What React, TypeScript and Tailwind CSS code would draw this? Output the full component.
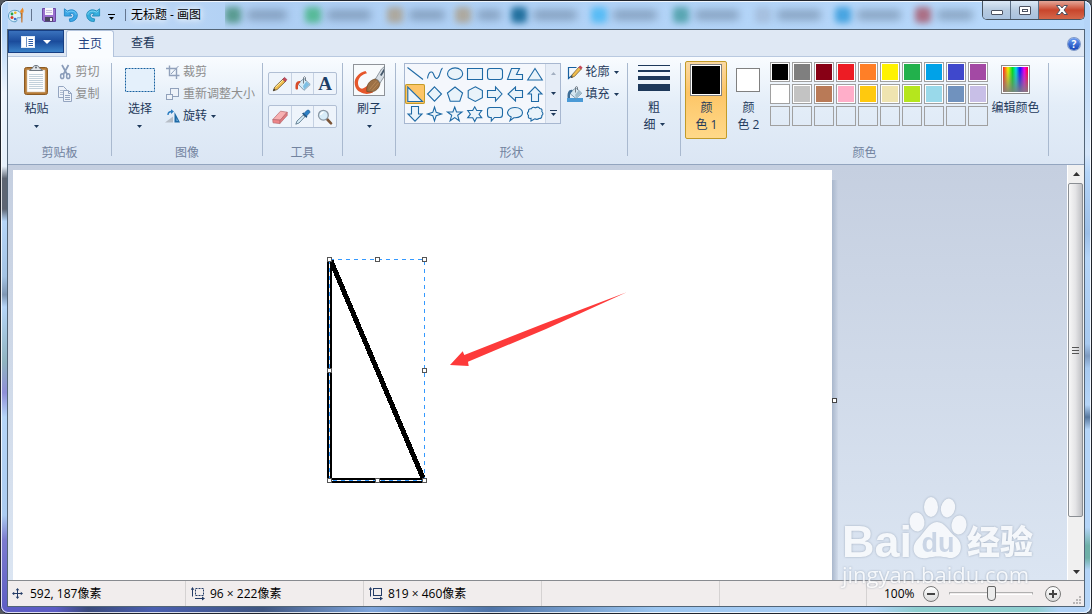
import type { ReactNode } from "react";

// ---------------------------------------------------------------------------
// Data
// ---------------------------------------------------------------------------

const PALETTE = [
  ["#000000", "#7f7f7f", "#880015", "#ed1c24", "#ff7f27", "#fff200", "#22b14c", "#00a2e8", "#3f48cc", "#a349a4"],
  ["#ffffff", "#c3c3c3", "#b97a57", "#ffaec9", "#ffc90e", "#efe4b0", "#b5e61d", "#99d9ea", "#7092be", "#c8bfe7"],
  ["", "", "", "", "", "", "", "", "", ""],
];

const SHAPES: { name: string; d: string; open?: boolean }[] = [
  { name: "直线", d: "M2.5 3.5 L18 15.5", open: true },
  { name: "曲线", d: "M2.5 14.5 C3.5 8 6.5 6 8.5 10 C10.5 15.5 12.5 16 14.5 11 C15.5 8 16 5 17.5 4", open: true },
  { name: "椭圆形", d: "M2.5 9.7 A7.6 5.8 0 1 0 17.7 9.7 A7.6 5.8 0 1 0 2.5 9.7 Z" },
  { name: "矩形", d: "M2.5 4.5 H17.5 V15.5 H2.5 Z" },
  { name: "圆角矩形", d: "M5 4.5 H15 Q17.5 4.5 17.5 7 V13 Q17.5 15.5 15 15.5 H5 Q2.5 15.5 2.5 13 V7 Q2.5 4.5 5 4.5 Z" },
  { name: "多边形", d: "M6.5 4.5 H14.5 L11.5 10.5 H17.5 V15.5 H2.5 Z" },
  { name: "三角形", d: "M10 4.5 L17.3 16 H2.7 Z" },
  { name: "直角三角形", d: "M2.8 3 V17.5 H17.5 Z" },
  { name: "菱形", d: "M9.5 2.8 L16.5 10 L9.5 17.2 L2.5 10 Z" },
  { name: "五边形", d: "M10 3 L17.6 9 L14.8 17.3 H5.2 L2.4 9 Z" },
  { name: "六边形", d: "M10.3 2.8 L17.4 6.5 V13.7 L10.3 17.4 L3.2 13.7 V6.5 Z" },
  { name: "右箭头", d: "M2.5 6.5 H10.5 V3 L17 10 L10.5 17 V13.5 H2.5 Z" },
  { name: "左箭头", d: "M17.5 6.5 H10.5 V3 L3 10 L10.5 17 V13.5 H17.5 Z" },
  { name: "上箭头", d: "M6.5 17.5 V10 H3 L10 2.8 L17 10 H13.5 V17.5 Z" },
  { name: "下箭头", d: "M6.5 2.5 V10 H3 L10 17.2 L17 10 H13.5 V2.5 Z" },
  { name: "四角星", d: "M9.5 3 L11.2 8.3 L16.5 10 L11.2 11.7 L9.5 17 L7.8 11.7 L2.5 10 L7.8 8.3 Z" },
  { name: "五角星", d: "M9.7 3 L11.5 8 H17 L12.7 11.3 L14.3 16.8 L9.7 13.6 L5.1 16.8 L6.7 11.3 L2.4 8 H7.9 Z" },
  { name: "六角星", d: "M9.7 2.8 L11.7 6.5 H16.7 L14 10.2 L16.7 13.8 H11.7 L9.7 17.5 L7.7 13.8 H2.7 L5.4 10.2 L2.7 6.5 H7.7 Z" },
  { name: "圆角矩形标注", d: "M5 3.5 H15 Q17.5 3.5 17.5 6 V10.5 Q17.5 13.5 15 13.5 H9.5 L6.3 17 V13.5 H5 Q2.5 13.5 2.5 10.5 V6 Q2.5 3.5 5 3.5 Z" },
  { name: "椭圆形标注", d: "M6.2 13.1 C-.5 10 3 3.5 10 3.5 C20 3.5 20 13.8 10 13.8 L8.8 13.7 L5 16.7 Z" },
  { name: "云形标注", d: "M6 14.4 Q2.5 14.8 3.5 11.7 Q1.3 9 3.6 7.5 Q3 4.5 6.2 4.8 Q8 2.2 10.3 3.8 Q13.5 2.1 14.7 4.5 Q17.8 4.8 16.8 7.5 Q19 9.9 16.8 11.5 Q17.2 14.5 14 14.5 Q12 16 9.8 14.8 L6 17 Z" },
];

const GLASS_TABS = [
  { icon: "bg-green-800/50", width: "w-20", text: "w-10" },
  { icon: "bg-green-600/50", width: "w-[82px]", text: "w-11" },
  { icon: "bg-yellow-700/35", width: "w-[68px]", text: "w-9" },
  { icon: "bg-yellow-700/35", width: "w-14", text: "w-6" },
  { icon: "bg-sky-800/80", width: "w-20", text: "w-11" },
  { icon: "bg-sky-500/50", width: "w-[82px]", text: "w-11" },
  { icon: "bg-teal-700/50", width: "w-[82px]", text: "w-11" },
  { icon: "bg-slate-400/40", width: "w-20", text: "w-11" },
  { icon: "bg-sky-600/60", width: "w-20", text: "w-11" },
  { icon: "bg-red-800/50", width: "w-16", text: "w-9" },
];

// ---------------------------------------------------------------------------
// Icons
// ---------------------------------------------------------------------------

function Svg({ size = 16, children }: { size?: number; children: ReactNode }) {
  return (
    <svg width={size} height={size} viewBox={`0 0 ${size} ${size}`} fill="none" className="shrink-0" aria-hidden="true">
      {children}
    </svg>
  );
}

function Caret({ className = "" }: { className?: string }) {
  return (
    <svg width="5" height="3" viewBox="0 0 5 3" className={`shrink-0 ${className}`} aria-hidden="true">
      <path d="M0 0 H5 L2.5 3 Z" fill="currentColor" />
    </svg>
  );
}

function PaintLogo() {
  return (
    <Svg>
      <path d="M7 3.3 C2.6 3.3 .5 6 .5 9 C.5 12.5 3.5 14.8 7 14.8 C9 14.8 9 13.2 8.7 12.2 C8.6 10.8 10 10.5 11.3 10.8 C13 11 13.5 9.5 13.3 8 C12.8 5 10.3 3.3 7 3.3 Z" fill="#d9f0fb" stroke="#5b9cc4" />
      <circle cx="4" cy="7" r="1.4" fill="#29a34a" />
      <circle cx="7.3" cy="5.7" r="1.3" fill="#e6b422" />
      <circle cx="4" cy="10.6" r="1.5" fill="#d8402c" />
      <circle cx="7" cy="12" r="1.2" fill="#3a66cf" />
      <path d="M13 5.5 L14.6 5.5 L14.4 15.5 L13.4 15.5 Z" fill="#c46a19" />
      <path d="M12 5.5 C12 3 14 2.5 14.5 .5 C16 3 15.7 4.2 15.3 5.8 Z" fill="#e98b2a" />
    </Svg>
  );
}

function SaveIcon() {
  return (
    <Svg>
      <path d="M1.5 1.5 H14.5 V14.5 H3 L1.5 13 Z" fill="#9a70cf" stroke="#6a4ba6" />
      <rect x="4" y="1" width="8" height="7" fill="#f7f5fb" />
      <path d="M5 3.5 H11 M5 5.5 H11" stroke="#c9bfdc" />
      <rect x="4" y="10" width="8" height="4.5" fill="#4a4760" />
      <rect x="9" y="11" width="2" height="3" fill="#ece8f5" />
    </Svg>
  );
}

function UndoIcon() {
  return (
    <Svg>
      <path d="M1.4 1.8 L4.3 4 C9.5 1.2 14.3 4 14.3 8.2 C14.3 12 11 14.8 6.8 14.6 L6.3 11.9 C9 11.8 10.8 10.4 10.8 8.6 C10.8 6.6 8.6 5.8 6.7 6.8 L8.8 9 H1.4 Z" fill="#3ba7e6" stroke="#2486c4" strokeWidth=".9" />
      <path d="M2.4 3.8 L4.4 5.2 C8.7 3 12.8 4.5 13.2 7.6" stroke="#7fd0f6" strokeWidth=".9" />
    </Svg>
  );
}

function RedoIcon() {
  return (
    <Svg>
      <path d="M14.6 1.8 L11.7 4 C6.5 1.2 1.7 4 1.7 8.2 C1.7 12 5 14.8 9.2 14.6 L9.7 11.9 C7 11.8 5.2 10.4 5.2 8.6 C5.2 6.6 7.4 5.8 9.3 6.8 L7.2 9 H14.6 Z" fill="#36aede" stroke="#248bb8" strokeWidth=".9" />
      <path d="M13.6 3.8 L11.6 5.2 C7.3 3 3.2 4.5 2.8 7.6" stroke="#84d8f3" strokeWidth=".9" />
    </Svg>
  );
}

function ClipboardIcon() {
  return (
    <Svg size={32}>
      <rect x="4.5" y="3.5" width="23" height="27" rx="2" fill="#b77b35" stroke="#8a5a24" />
      <rect x="7" y="6" width="18" height="22" fill="#fdfdfd" stroke="#d3c4ae" strokeWidth=".6" />
      <path d="M9 10.5 H23 M9 12.5 H23 M9 14.5 H23 M9 16.5 H23 M9 18.5 H23 M9 20.5 H23 M9 22.5 H23 M9 24.5 H23" stroke="#b4c5d2" strokeWidth=".8" />
      <path d="M9.5 6.5 L13 3.5 C13 .8 19 .8 19 3.5 L22.5 6.5 Z" fill="#dfe3e7" stroke="#6d7680" />
      <circle cx="16" cy="3.4" r="1" fill="#5c6570" />
    </Svg>
  );
}

function CutIcon() {
  return (
    <Svg>
      <path d="M5 1 L10.2 10.5 M11.5 1 L6.3 10.5" stroke="#8a9cb9" strokeWidth="1.7" />
      <ellipse cx="5.2" cy="12.2" rx="1.6" ry="2.4" stroke="#8a9cb9" strokeWidth="1.5" />
      <ellipse cx="11.2" cy="12.2" rx="1.6" ry="2.4" stroke="#8a9cb9" strokeWidth="1.5" />
    </Svg>
  );
}

function CopyIcon() {
  return (
    <Svg>
      <path d="M1.5 .5 H6.5 L9.5 3.5 V11.5 H1.5 Z" fill="#edf2f9" stroke="#94a5c0" />
      <path d="M3 4.5 H6 M3 6.5 H6 M3 8.5 H6" stroke="#b0bdd1" />
      <path d="M6.5 4.5 H11.5 L14.5 7.5 V15.5 H6.5 Z" fill="#edf2f9" stroke="#94a5c0" />
      <path d="M11.5 4.5 V7.5 H14.5 M8 9.5 H13 M8 11.5 H13 M8 13.5 H13" stroke="#94a5c0" />
    </Svg>
  );
}

function SelectIcon() {
  return (
    <Svg size={32}>
      <rect x="1.5" y="4.5" width="29" height="23" fill="#e4f0fb" stroke="#17609f" strokeDasharray="2 1" />
    </Svg>
  );
}

function CropIcon() {
  return (
    <Svg>
      <path d="M1 4.5 H11.5 V15 M4.5 1.5 V11.5 H14.5" stroke="#91a1bb" strokeWidth="1.4" />
      <path d="M6 10 L13.5 2" stroke="#91a1bb" />
    </Svg>
  );
}

function ResizeIcon() {
  return (
    <Svg>
      <rect x="5.5" y="2.5" width="8" height="8" fill="#edf2f9" stroke="#91a1bb" />
      <rect x="1.5" y="8.5" width="6" height="5" fill="#edf2f9" stroke="#91a1bb" />
    </Svg>
  );
}

function RotateIcon() {
  return (
    <Svg>
      <path d="M0 14.5 H8 V8.5 Z" fill="#b7bec7" />
      <path d="M9.5 14.5 V4 L15 14.5 Z" fill="#1d69a5" />
      <path d="M11.5 13 V10 L13 13 Z" fill="#7ebbe5" />
      <path d="M3 7 C3 4 5 3.5 7 3.5" stroke="#2a7cc0" strokeWidth="1.4" />
      <path d="M6 1.2 L9 3.5 L6 6 Z" fill="#2a7cc0" />
    </Svg>
  );
}

function PencilIcon() {
  return (
    <Svg>
      <path d="M1.3 14.8 L2.8 11 L11.5 2.5 L14 5 L5.2 13.5 Z" fill="#f0bd4d" stroke="#6d552d" strokeWidth=".8" />
      <path d="M3.5 11.3 L12 3.2" stroke="#fff0a6" />
      <path d="M10.7 3.3 L12.5 1.3 L15 3.7 L13 5.7 Z" fill="#c5485b" stroke="#8d3341" strokeWidth=".5" />
      <path d="M1 15 L1.9 12.6 L3.5 14.1 Z" fill="#333" />
    </Svg>
  );
}

function BucketIcon() {
  return (
    <Svg>
      <path d="M3.5 7 L9 2.5 L15.2 8.5 L9 14.3 L3.5 8.5 Z" fill="#d5ebf7" stroke="#6b8799" strokeWidth=".8" />
      <path d="M9 13.6 L14.5 8.4 L11.3 5.5 L8 10 Z" fill="#7dbfe4" />
      <path d="M8.5 7.5 L8.5 1.5 Q9.5 -.2 10.5 1.5 V5" stroke="#737d87" />
      <path d="M5.2 5 C1.5 4.5 0 7.5 .6 13 Q1.7 14.2 3 13 C3 9 3.2 7.5 5.2 7 Z" fill="#d84c2a" />
    </Svg>
  );
}

function EraserIcon() {
  return (
    <Svg>
      <path d="M.8 10.5 L8.5 2.2 L15.2 3.2 L8.2 11.2 Z" fill="#f7b0b1" stroke="#b9686d" strokeWidth=".7" />
      <path d="M.8 10.5 L8.2 11.2 L7.8 14.6 L1 13.8 Z" fill="#ee8588" stroke="#b9686d" strokeWidth=".7" />
      <path d="M8.2 11.2 L15.2 3.2 V6.4 L7.8 14.6 Z" fill="#e07b80" stroke="#b9686d" strokeWidth=".7" />
    </Svg>
  );
}

function DropperIcon() {
  return (
    <Svg>
      <path d="M.8 15.2 L2 12 L8.2 6.2 L9.8 7.8 L4 14 Z" fill="#d8edf8" stroke="#4d6c82" strokeWidth=".8" />
      <path d="M7 4.5 L8.5 3.6 L12.4 7.5 L11.4 9 Z" fill="#22547f" />
      <path d="M9 4.5 L11.8 1.5 Q14.5 .2 15 3.2 L11.5 7 Z" fill="#2c7fc4" stroke="#1c5c97" strokeWidth=".7" />
    </Svg>
  );
}

function MagnifierIcon() {
  return (
    <Svg>
      <path d="M9.5 9.5 L14 14.3" stroke="#7b5538" strokeWidth="2.6" strokeLinecap="round" />
      <circle cx="6.4" cy="6.2" r="4.9" fill="#d8edf9" stroke="#8b98a4" strokeWidth="1.3" />
      <path d="M3.5 6 Q4 3.5 6.5 3.3" stroke="#fff" strokeWidth="1.3" />
    </Svg>
  );
}

function BrushIcon() {
  return (
    <Svg size={32}>
      <rect x=".5" y=".5" width="31" height="31" fill="#f7fafc" stroke="#8f9399" />
      <path d="M12.5 7 C6 8.5 .8 14 1.8 20.5 C3 27.5 9 30.5 17 28.5 L15 24.5 C9 26.5 5 24 5 19 C5 14 9 10 14 9.2 Z" fill="#e5562b" />
      <path d="M5 24 C9 26.5 12 23.5 15.5 20.5 L20 28.5 C14 31 8 30.5 5 24 Z" fill="#e5562b" />
      <path d="M13.8 27.5 C13.2 21 16 16.5 22.5 14.8 Q25.5 15 27 19 C26.5 25.5 20.5 29.5 13.8 27.5 Z" fill="#9c7045" stroke="#61401f" strokeWidth=".6" />
      <path d="M16.5 25.5 L23.5 17 M19 26.5 L25.5 19" stroke="#bd8d5a" strokeWidth=".8" />
      <path d="M22.5 14.8 L28.5 5 L31.5 2.5 V12 L27 19 Q25.5 15.5 22.5 14.8 Z" fill="#d7dee4" stroke="#6b7680" strokeWidth=".7" />
      <path d="M27 11 L31 4.5 V8 L28.5 12 Z" fill="#44576a" />
    </Svg>
  );
}

function OutlineIcon() {
  return (
    <Svg>
      <path d="M9.5 3.5 H1.5 V14.5 L8 9" stroke="#17609f" strokeWidth="1.2" />
      <path d="M4.2 13.6 L5.4 10.4 L12.2 2.7 L14.6 4.8 L7.5 12.4 Z" fill="#f0bd4d" stroke="#6d552d" strokeWidth=".7" />
      <path d="M11.5 3.4 L13.2 1.4 L15.6 3.6 L13.8 5.6 Z" fill="#c5485b" />
      <path d="M4 14 L4.7 12 L6 13.2 Z" fill="#333" />
    </Svg>
  );
}

function FillIcon() {
  return (
    <Svg>
      <rect x="0" y="12" width="16" height="4" fill="#4a9ad6" />
      <path d="M3.5 6 L9 1.8 L14.7 7.2 L9 12.5 L3.5 8 Z" fill="#d4e6f0" stroke="#6b8799" strokeWidth=".8" />
      <path d="M9 11.8 L14 7.2 L11.3 4.8 L8 9 Z" fill="#a0bccc" />
      <path d="M8.5 6.5 V1.2 Q9.5 -.2 10.5 1.2 V4" stroke="#737d87" />
      <path d="M5.2 3.8 C1.5 3.5 .2 6.5 .6 12 H3 C3 8 3.2 6.5 5.2 6 Z" fill="#3d6d96" />
    </Svg>
  );
}

function MoveIcon() {
  return (
    <Svg size={12}>
      <path d="M5.5 1.5 V9.5 M1.5 5.5 H9.5" stroke="#243c66" />
      <path d="M5.5 0 L7.3 2.2 H3.7 Z M5.5 11 L3.7 8.8 H7.3 Z M0 5.5 L2.2 3.7 V7.3 Z M11 5.5 L8.8 7.3 V3.7 Z" fill="#243c66" />
    </Svg>
  );
}

function SizeIcon({ dashed = false }: { dashed?: boolean }) {
  return (
    <Svg size={14}>
      <rect x="4.5" y="1.5" width="8" height="7" stroke="#243c66" strokeDasharray={dashed ? "2 1" : undefined} />
      <path d="M1.5 2 V9.5 M4 11.5 H12" stroke="#243c66" />
      <path d="M1.5 0 L3.3 2.8 H-.3 Z M14 11.5 L11 13.5 V9.5 Z" fill="#243c66" />
    </Svg>
  );
}

// ---------------------------------------------------------------------------
// Title bar
// ---------------------------------------------------------------------------

function TitleBar() {
  return (
    <header className="flex h-[28px] shrink-0 items-start">
      <div className="flex h-[28px] shrink-0 items-center pl-px text-black">
        <PaintLogo />
        <span className="ml-[7px] h-3 w-px bg-slate-500" />
        <button aria-label="保存" className="ml-[9px]"><SaveIcon /></button>
        <button aria-label="撤消" className="ml-[6px]"><UndoIcon /></button>
        <button aria-label="重做" className="ml-[6px]"><RedoIcon /></button>
        <button aria-label="自定义快速访问工具栏" className="ml-[7px] flex flex-col items-center gap-[2px] pt-1">
          <span className="h-px w-[7px] bg-black" />
          <Caret />
        </button>
        <span className="mr-[5px] ml-[10px] h-3 w-px bg-slate-500" />
        <h1 className="text-[12px] [text-shadow:0_0_6px_white,0_0_8px_white]">无标题 - 画图</h1>
      </div>
      <div className="ml-6 flex h-[28px] min-w-0 flex-1 items-center overflow-hidden" aria-hidden="true">
        {GLASS_TABS.map((tab, i) => (
          <div key={i} className={`flex shrink-0 items-center gap-[6px] ${tab.width}`}>
            <span className={`h-4 w-4 rounded-sm blur-[3px] ${tab.icon}`} />
            <span className={`h-[10px] rounded-sm bg-slate-700/35 blur-[4px] ${tab.text}`} />
          </div>
        ))}
      </div>
      <div className="flex h-[19px] w-[103px] shrink-0 overflow-hidden rounded-b-[5px] border border-t-0 border-[#46535f]">
        <button aria-label="最小化" className="flex w-7 items-center justify-center border-r border-[#5c6f85] bg-linear-to-b from-[#dce9f6] via-[#b7cbe0] to-[#a9c2df]">
          <span className="mt-1 h-[5px] w-3 rounded-[1px] border border-[#4c5261] bg-white" />
        </button>
        <button aria-label="最大化" className="flex w-7 items-center justify-center border-r border-[#5c6f85] bg-linear-to-b from-[#dce9f6] via-[#b7cbe0] to-[#a9c2df]">
          <span className="flex h-[9px] w-3 items-center justify-center rounded-[1px] border border-[#4c5261] bg-white">
            <span className="h-[3px] w-[6px] border border-[#4c5261]" />
          </span>
        </button>
        <button aria-label="关闭" className="flex flex-1 items-center justify-center bg-linear-to-b from-[#e3a799] via-[#c8452c] to-[#d4674a]">
          <svg width="14" height="12" viewBox="0 0 14 12" aria-hidden="true">
            <path d="M1.5 1.5 H5 L7 4 L9 1.5 H12.5 L9 6 L12.5 10.5 H9 L7 8 L5 10.5 H1.5 L5 6 Z" fill="#fff" stroke="#4c5261" />
          </svg>
        </button>
      </div>
    </header>
  );
}

function TabRow() {
  return (
    <nav className="flex h-[27px] shrink-0 items-end border-b border-[#b9c9e0] bg-[#dfe8f4] pr-1">
      <button aria-label="文件" className="mb-[3px] flex h-[23px] w-14 items-center justify-center gap-2 border border-[#173f83] bg-linear-to-b from-[#3a72bd] via-[#1b4c9c] to-[#3b82c8] text-white">
        <svg width="14" height="12" viewBox="0 0 14 12" aria-hidden="true">
          <rect x=".5" y=".5" width="13" height="11" fill="#fff" stroke="#dfeaf7" />
          <path d="M5.5 1 V11" stroke="#6d92c5" />
          <path d="M7.5 3.5 H12 M7.5 5.5 H12 M7.5 7.5 H12 M7.5 9.5 H12" stroke="#2f5fa7" />
        </svg>
        <svg width="8" height="4" viewBox="0 0 8 4" aria-hidden="true">
          <path d="M0 0 H8 L4 4 Z" fill="#fff" />
        </svg>
      </button>
      <button className="-mb-px ml-[2px] h-[27px] w-12 rounded-t-[3px] border border-b-0 border-[#b2c3dc] bg-[#f9fcff] text-[#1e3f80]">
        主页
      </button>
      <button className="h-[26px] w-[58px] text-[#1e395b]">查看</button>
      <button aria-label="帮助" className="mb-[6px] ml-auto flex h-3 w-3 items-center justify-center rounded-full bg-linear-to-b from-[#6d9cf0] to-[#1543b8] text-[10px] leading-[10px] font-bold text-white ring-1 ring-[#7e98c8]">
        ?
      </button>
    </nav>
  );
}

// ---------------------------------------------------------------------------
// Ribbon
// ---------------------------------------------------------------------------

function Group({ label, width, children }: { label?: string; width: string; children: ReactNode }) {
  return (
    <section className={`flex h-[107px] shrink-0 flex-col ${width}`}>
      <div className="mt-[6px] mb-2 flex flex-1 flex-col border-r border-[#a9b9cf] pt-1">
        <div className="-mt-[6px] flex flex-1 items-start justify-center">{children}</div>
        {label && <p className="-mb-[5px] text-center leading-4 text-[#72839f]">{label}</p>}
      </div>
    </section>
  );
}

function BigButton({ icon, label }: { icon: ReactNode; label: string }) {
  return (
    <button className="flex w-[42px] flex-col items-center pt-[3px] text-[#1e395b]">
      {icon}
      <span className="mt-[5px] leading-4">{label}</span>
      <Caret className="mt-2" />
    </button>
  );
}

function RowButton({ icon, label, disabled, caret }: { icon: ReactNode; label: string; disabled?: boolean; caret?: boolean }) {
  return (
    <button
      disabled={disabled}
      className={`flex h-[22px] items-center gap-[2px] whitespace-nowrap ${disabled ? "text-[#8d8d8d]" : "text-[#1e395b]"}`}
    >
      {icon}
      {label}
      {caret && <Caret className="ml-[2px]" />}
    </button>
  );
}

function ToolBox({ tools }: { tools: { name: string; icon: ReactNode }[] }) {
  return (
    <div className="flex h-[23px] w-[69px] divide-x divide-[#c5d1e2] rounded-[2px] border border-[#b1bfd4] bg-[#eef4fb]">
      {tools.map((tool) => (
        <button key={tool.name} aria-label={tool.name} className="flex flex-1 items-center justify-center">
          {tool.icon}
        </button>
      ))}
    </div>
  );
}

function ShapeGallery() {
  return (
    <div className="flex h-[61px] border border-[#a7b7d0] bg-[#f4f7fc]">
      <div className="grid grid-cols-7">
        {SHAPES.map((shape) => {
          const selected = shape.name === "直角三角形";
          return (
            <button
              key={shape.name}
              aria-label={shape.name}
              aria-pressed={selected}
              className={`h-5 w-5 ${selected ? "rounded-[2px] bg-[#fdc568] ring-1 ring-[#c29b29] ring-inset" : ""}`}
            >
              <svg width="20" height="20" viewBox="0 0 20 20" aria-hidden="true">
                <path d={shape.d} fill={shape.open ? "none" : "#e9f3fa"} stroke="#1f6aa5" strokeWidth="1.1" />
              </svg>
            </button>
          );
        })}
      </div>
      <div className="flex w-[15px] flex-col border-l border-[#cfd9e7] bg-[#e6edf7] text-[#1e395b]">
        <button aria-label="上移" className="flex flex-1 items-center justify-center text-[#a3afc1]">
          <Caret className="rotate-180" />
        </button>
        <button aria-label="下移" className="flex flex-1 items-center justify-center">
          <Caret />
        </button>
        <button aria-label="更多形状" className="flex flex-1 flex-col items-center justify-center gap-[2px]">
          <span className="h-px w-[7px] bg-[#1e395b]" />
          <Caret />
        </button>
      </div>
    </div>
  );
}

function Palette() {
  return (
    <div className="mt-px flex flex-col gap-[2px]">
      {PALETTE.map((row, r) => (
        <div key={r} className="flex gap-[2px]">
          {row.map((color, c) => (
            <button
              key={c}
              aria-label={color || "自定义颜色"}
              className={`h-5 w-5 border border-[#a0a0a0] p-px ${color ? "bg-white" : ""}`}
            >
              <span className="block h-4 w-4" style={{ background: color || "transparent" }} />
            </button>
          ))}
        </div>
      ))}
    </div>
  );
}

function Ribbon() {
  return (
    <div className="flex h-[108px] shrink-0 overflow-hidden border-b border-[#93a5bf] bg-linear-to-b from-[#f9fcff] via-[#e3edf8] via-45% to-[#dbe6f4]">
      <Group label="剪贴板" width="w-[104px]">
        <BigButton icon={<ClipboardIcon />} label="粘贴" />
        <div className="mr-1">
          <RowButton icon={<CutIcon />} label="剪切" disabled />
          <RowButton icon={<CopyIcon />} label="复制" disabled />
        </div>
      </Group>

      <Group label="图像" width="w-[151px]">
        <BigButton icon={<SelectIcon />} label="选择" />
        <div className="ml-1">
          <RowButton icon={<CropIcon />} label="裁剪" disabled />
          <RowButton icon={<ResizeIcon />} label="重新调整大小" disabled />
          <RowButton icon={<RotateIcon />} label="旋转" caret />
        </div>
      </Group>

      <Group label="工具" width="w-20">
        <div className="flex flex-col gap-[10px] pt-[11px]">
          <ToolBox
            tools={[
              { name: "铅笔", icon: <PencilIcon /> },
              { name: "用颜色填充", icon: <BucketIcon /> },
              { name: "文本", icon: <span className="font-['Liberation_Serif',serif] text-[19px] leading-5 font-bold text-[#1c3d66]">A</span> },
            ]}
          />
          <ToolBox
            tools={[
              { name: "橡皮擦", icon: <EraserIcon /> },
              { name: "颜色选取器", icon: <DropperIcon /> },
              { name: "放大镜", icon: <MagnifierIcon /> },
            ]}
          />
        </div>
      </Group>

      <Group width="w-[53px]">
        <BigButton icon={<BrushIcon />} label="刷子" />
      </Group>

      <Group label="形状" width="w-[232px]">
        <div className="pt-[2px]">
          <ShapeGallery />
        </div>
        <div className="ml-[6px]">
          <RowButton icon={<OutlineIcon />} label="轮廓" caret />
          <RowButton icon={<FillIcon />} label="填充" caret />
        </div>
      </Group>

      <Group width="w-[53px]">
        <button className="flex w-[42px] flex-col items-center pt-1 text-[#1e395b]">
          <span className="flex w-8 flex-col gap-1 pb-1">
            <span className="h-px bg-[#1e395b]" />
            <span className="h-[2px] bg-[#1e395b]" />
            <span className="h-1 bg-[#1e395b]" />
            <span className="h-[7px] bg-[#1e395b]" />
          </span>
          <span className="mt-1 leading-[17px]">粗</span>
          <span className="flex items-center gap-1 leading-[17px]">
            细
            <Caret />
          </span>
        </button>
      </Group>

      <Group label="颜色" width="w-[368px]">
        <button aria-pressed="true" className="flex h-[78px] w-[42px] flex-col items-center rounded-[2px] border border-[#c29b29] bg-linear-to-b from-[#fbd9a3] via-[#fdc566] via-40% to-[#ffd989] pt-[2px] text-[#1e395b]">
          <span className="h-8 w-8 border border-[#808080] bg-white p-px">
            <span className="block h-full bg-black" />
          </span>
          <span className="mt-[3px] leading-[17px]">颜</span>
          <span className="leading-[17px]">色 1</span>
        </button>
        <button aria-pressed="false" className="flex h-[78px] w-[42px] flex-col items-center pt-[7px] text-[#1e395b]">
          <span className="h-6 w-6 border border-[#808080] bg-white" />
          <span className="mt-[7px] leading-[17px]">颜</span>
          <span className="leading-[17px]">色 2</span>
        </button>
        <div className="ml-px">
          <Palette />
        </div>
        <button className="flex flex-col items-center pr-1 pl-[3px] pt-1 text-[#1e395b]">
          <span className="h-[29px] w-[29px] border border-[#8c8c8c] bg-white p-px">
            <svg width="25" height="25" viewBox="0 0 25 25" aria-hidden="true">
              <defs>
                <linearGradient id="hue">
                  <stop offset="0" stopColor="#f22" />
                  <stop offset=".2" stopColor="#ee0" />
                  <stop offset=".38" stopColor="#0d2" />
                  <stop offset=".52" stopColor="#0dd" />
                  <stop offset=".68" stopColor="#11f" />
                  <stop offset=".85" stopColor="#e0e" />
                  <stop offset="1" stopColor="#f03" />
                </linearGradient>
                <linearGradient id="fade" x2="0" y2="1">
                  <stop offset=".1" stopColor="#808080" stopOpacity="0" />
                  <stop offset="1" stopColor="#808080" stopOpacity=".9" />
                </linearGradient>
              </defs>
              <rect width="25" height="25" fill="url(#hue)" />
              <rect width="25" height="25" fill="url(#fade)" />
            </svg>
          </span>
          <span className="mt-[6px] leading-4 whitespace-nowrap">编辑颜色</span>
        </button>
      </Group>
    </div>
  );
}

// ---------------------------------------------------------------------------
// Workspace
// ---------------------------------------------------------------------------

const HANDLES = [
  [316, 89], [364, 89], [411, 89],
  [316, 200], [411, 200],
  [316, 310], [364, 310], [411, 310],
];

function Drawing() {
  return (
    <svg width="819" height="460" viewBox="0 0 819 460" className="block bg-white" aria-label="画布">
      <g shapeRendering="crispEdges">
        <path d="M316.5 92 V310.5 H410" fill="none" stroke="#000" strokeWidth="5" />
        <path d="M318 91 L410 308" stroke="#000" strokeWidth="5" />
        <path d="M316.5 92 V310.5 H411" fill="none" stroke="#fff" />
        <path d="M316.5 89.5 H411.5 V310.5 M316.5 89.5 V310.5 H411.5" fill="none" stroke="#3399ff" strokeDasharray="4 4" />
        {HANDLES.map(([x, y]) => (
          <rect key={`${x}-${y}`} x={x - 1.5} y={y - 1.5} width="4" height="4" fill="#fff" stroke="#555" />
        ))}
      </g>
      <path d="M437 195 L449.7 181.3 L451.3 185 L530 154 L613.7 122.3 L533 159 L455 191.7 L455.7 196 Z" fill="#fd3a3a" />
    </svg>
  );
}

function VerticalScrollbar() {
  return (
    <div className="flex w-[17px] shrink-0 flex-col border-l border-white bg-[#f0f0f0]">
      <button aria-label="向上滚动" className="flex h-[18px] items-center justify-center">
        <svg width="7" height="4" viewBox="0 0 7 4" aria-hidden="true"><path d="M3.5 0 L7 4 H0 Z" fill="#333" /></svg>
      </button>
      <div className="flex-1 pb-[46px]">
        <div className="flex h-full w-[15px] flex-col items-center justify-center gap-[2px] rounded-[2px] border border-[#8b8f94] bg-linear-to-r from-[#f7f7f7] via-[#e4e4e6] to-[#bfc0c4]">
          <span className="h-px w-[7px] bg-[#555]" />
          <span className="h-px w-[7px] bg-[#555]" />
          <span className="h-px w-[7px] bg-[#555]" />
        </div>
      </div>
      <button aria-label="向下滚动" className="flex h-[17px] items-center justify-center">
        <svg width="7" height="4" viewBox="0 0 7 4" aria-hidden="true"><path d="M0 0 H7 L3.5 4 Z" fill="#333" /></svg>
      </button>
    </div>
  );
}

function Watermark() {
  return (
    <div className="pointer-events-none absolute right-[51px] bottom-[18px] flex flex-col text-white opacity-75 [filter:drop-shadow(0_0_1px_#8e9bad)]" aria-label="Baidu 经验">
      <div className="flex items-end">
        <span className="font-['Liberation_Sans',sans-serif] text-[45px] leading-[36px] font-bold">Bai</span>
        <svg width="60" height="64" viewBox="0 0 60 64" className="-ml-[5px]" aria-hidden="true">
          <ellipse cx="10" cy="26" rx="7.5" ry="9.5" transform="rotate(-8 10 26)" fill="#fff" />
          <ellipse cx="24" cy="11" rx="7" ry="10" fill="#fff" />
          <ellipse cx="41" cy="12" rx="7" ry="9.5" transform="rotate(12 41 12)" fill="#fff" />
          <ellipse cx="52" cy="29" rx="7.5" ry="9.5" transform="rotate(8 52 29)" fill="#fff" />
          <path d="M30 26 C38 26 41 35 49 41 C58 49 54 63 42 62 C34 60 28 60 20 62 C7 64 3 52 10 44 C18 36 22 26 30 26 Z" fill="#fff" />
          <text x="31" y="56" textAnchor="middle" fontFamily="Liberation Sans, sans-serif" fontSize="27" fontWeight="bold" fill="#c5d1e2">du</text>
        </svg>
        <span className="font-['Noto_Sans_CJK_SC',sans-serif] text-[33px] leading-[40px] font-black">经验</span>
      </div>
      <span className="font-['Open_Sans',sans-serif] text-[22px] leading-7">jingyan.baidu.com</span>
    </div>
  );
}

function Workspace() {
  return (
    <main className="flex min-h-0 flex-1 bg-linear-to-b from-[#c5cfe0] to-[#dbe5f2]">
      <div className="relative h-0 min-h-full min-w-0 flex-1 overflow-hidden pt-[5px] pl-[5px]">
        <div className="flex w-max items-center">
          <Drawing />
          <div className="mt-[10px] flex h-[450px] w-[6px] items-center bg-linear-to-r from-[#a9b7cc] to-[#c5cfe0]/40">
            <span className="mb-[10px] h-[5px] w-[5px] border border-[#444] bg-white" />
          </div>
        </div>
      </div>
      <VerticalScrollbar />
    </main>
  );
}

function StatusBar() {
  return (
    <footer className="flex h-[26px] shrink-0 items-stretch border-t border-[#888b90] bg-[#f1eded] text-black">
      <div className="flex w-[178px] items-center gap-[6px] border-r border-[#d5d2d2] pl-1">
        <MoveIcon />
        592, 187像素
      </div>
      <div className="flex w-[178px] items-center gap-[5px] border-r border-[#d5d2d2] pl-[5px]">
        <SizeIcon dashed />
        96 × 222像素
      </div>
      <div className="flex w-[178px] items-center gap-[5px] border-r border-[#d5d2d2] pl-[5px]">
        <SizeIcon />
        819 × 460像素
      </div>
      <div className="w-[178px] border-r border-[#d5d2d2]" />
      <div className="flex-1 border-r border-[#d5d2d2]" />
      <div className="flex w-[217px] items-center pl-[17px]">
        <label htmlFor="zoom" className="w-[39px]">100%</label>
        <button aria-label="缩小" className="flex h-4 w-4 items-center justify-center rounded-full border border-[#777] bg-linear-to-b from-white to-[#dcdcdc]">
          <span className="h-[2px] w-2 bg-[#444]" />
        </button>
        <input
          id="zoom"
          type="range"
          defaultValue={50}
          className="mx-[10px] h-4 w-[84px] appearance-none bg-transparent [&::-webkit-slider-runnable-track]:h-[3px] [&::-webkit-slider-runnable-track]:border [&::-webkit-slider-runnable-track]:border-[#b0b0b0] [&::-webkit-slider-runnable-track]:border-b-white [&::-webkit-slider-thumb]:-mt-[7px] [&::-webkit-slider-thumb]:h-[15px] [&::-webkit-slider-thumb]:w-[9px] [&::-webkit-slider-thumb]:appearance-none [&::-webkit-slider-thumb]:rounded-t-[2px] [&::-webkit-slider-thumb]:rounded-b-[4px] [&::-webkit-slider-thumb]:border [&::-webkit-slider-thumb]:border-[#666] [&::-webkit-slider-thumb]:bg-[#ececec]"
        />
        <button aria-label="放大" className="ml-[2px] flex h-4 w-4 items-center justify-center rounded-full border border-[#777] bg-linear-to-b from-white to-[#dcdcdc]">
          <svg width="8" height="8" viewBox="0 0 8 8" aria-hidden="true"><path d="M4 0 V8 M0 4 H8" stroke="#444" strokeWidth="2" /></svg>
        </button>
        <svg width="10" height="10" viewBox="0 0 10 10" className="mr-[2px] mb-px ml-auto self-end" aria-hidden="true">
          <path d="M7 1h2v2h-2z M4 4h2v2h-2z M7 4h2v2h-2z M1 7h2v2h-2z M4 7h2v2h-2z M7 7h2v2h-2z" fill="#b9b6b6" />
        </svg>
      </div>
    </footer>
  );
}

// Tinted glass along the left, right and bottom edges of the window
function GlassFrame() {
  return (
    <div className="pointer-events-none absolute inset-0" aria-hidden="true">
      <div className="absolute inset-x-0 bottom-0 h-[7px] bg-[linear-gradient(to_right,#5c5cc4_5%,#3a4a7c_8%,#4a5fb0_14%,#3f5580_24%,#7fa6dc_34%,#4f74a8_45%,#9cc6f0_60%,#b0d2f7_80%,#8fcfd0_84%,#8fcfd0_95%,#b0d2f7_97%)]" />
      <div className="absolute inset-y-0 left-0 w-[7px] bg-[linear-gradient(to_bottom,#b5d5f8_5%,#eef5fd_15%,#e6f0fb_27%,#5d6573_29%,#5d6573_34%,#b5d5f8_36%,#a3c3e4_45%,#7f97b4_48%,#b5d5f8_50%,#8fb3c0_59%,#8f8fd8_64%,#b5d5f8_68%,#aacbf0_84%,#7c7ccf_88%,#5c5cc4)]" />
      <div className="absolute inset-y-0 right-0 w-[7px] bg-[linear-gradient(to_bottom,#b5d5f8_5%,#d5e6fa_25%,#b5d5f8_28%,#9cbfe8_38%,#b5d5f8_42%,#a8caf0_56%,#7d9ac0_58%,#a8caf0_60%,#b5d5f8_66%,#56779e_68%,#b5d5f8_70%,#b5d5f8_86%,#6eb0a8_89%,#6eb0a8_91%,#b5d5f8_93%)]" />
      <div className="absolute inset-0 rounded-[7px] ring-1 ring-white/80 ring-inset" />
    </div>
  );
}

export default function App() {
  return (
    <div className="h-screen bg-[#55595f] font-['Open_Sans','Noto_Sans_CJK_SC',sans-serif] text-[12px]">
      <div className="relative flex h-full flex-col overflow-hidden rounded-lg border border-[#20242c] bg-linear-to-r from-[#c9def6] via-[#aecff4] via-25% to-[#b8d9fb] px-[6px] pb-[6px]">
        <GlassFrame />
        <div className="relative flex min-h-0 flex-1 flex-col">
          <TitleBar />
          <div className="relative flex min-h-0 flex-1 flex-col border border-[#536577]">
            <TabRow />
            <Ribbon />
            <Workspace />
            <StatusBar />
            <Watermark />
          </div>
        </div>
      </div>
    </div>
  );
}
